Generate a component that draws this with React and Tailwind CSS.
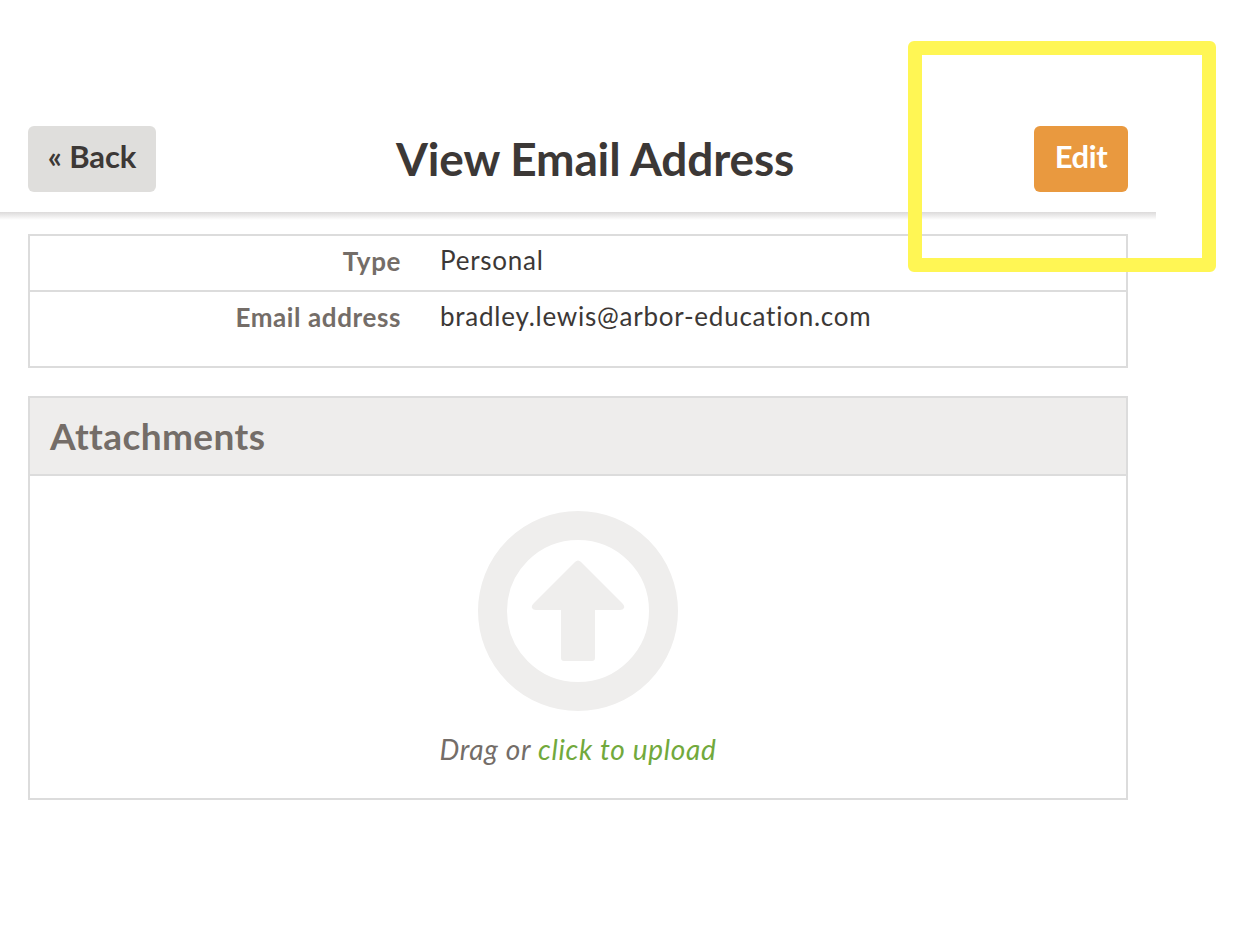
function UploadIcon() {
  return (
    <svg width="200" height="200" viewBox="0 0 200 200" className="block">
      <circle cx="100" cy="100" r="85.5" fill="none" stroke="#efeeed" strokeWidth="29" />
      <path
        d="M97 51 Q100 48 103 51 L144 92 Q147 95 146 97 Q145 99 142 99 L117 99 L117 147 Q117 150 114 150 L86 150 Q83 150 83 147 L83 99 L58 99 Q55 99 54 97 Q53 95 56 92 Z"
        fill="#efeeed"
      />
    </svg>
  );
}

function InfoRow({ label, value, className }) {
  return (
    <div className={`flex ${className}`}>
      <div className="mt-[1px] w-[371px] text-right text-[26px] leading-[34px] font-bold tracking-[0.6px] text-[#746d68]">{label}</div>
      <div className="ml-[39px] text-[26px] leading-[34px] tracking-[0.76px] text-[#3c3836]">{value}</div>
    </div>
  );
}

export default function App() {
  return (
    <div className="relative h-[944px] w-[1258px] overflow-hidden bg-white font-['Lato',sans-serif]">
      <div className="w-[1156px] pt-[126px]">
        <div className="flex h-[86px] items-start justify-between px-[28px]">
          <button className="h-[66px] w-[128px] rounded-[6px] bg-[#dfdedc] pb-[6px] text-[31px] font-bold tracking-[-0.1px] text-[#3c3836]">
            « Back
          </button>
          <h1 className="text-[46px] leading-[66px] font-bold tracking-[-0.15px] text-[#3c3836]">View Email Address</h1>
          <button className="h-[66px] w-[94px] rounded-[6px] bg-[#e9993f] pb-[6px] text-[31px] font-bold tracking-[-0.4px] text-white">
            Edit
          </button>
        </div>
        <div className="h-[8px] bg-gradient-to-b from-[#dcdada] to-white" />
      </div>

      <div className="mt-[14px] ml-[28px] w-[1100px]">
        <div className="h-[134px] border-2 border-[#dcdcdc]">
          <InfoRow label="Type" value="Personal" className="h-[56px] border-b-2 border-[#dcdcdc] pt-[7px]" />
          <InfoRow label="Email address" value="bradley.lewis@arbor-education.com" className="pt-[7px]" />
        </div>

        <div className="mt-[28px] h-[404px] border-2 border-[#dcdcdc]">
          <div className="h-[78px] border-b-2 border-[#dcdcdc] bg-[#eeedec] px-[20px] text-[37px] leading-[76px] font-bold tracking-[0.4px] text-[#746d68]">
            Attachments
          </div>
          <div className="flex flex-col items-center pt-[35px]">
            <UploadIcon />
            <p className="mt-[18px] text-[28px] leading-[40px] tracking-[0.7px] text-[#746d68] italic">
              Drag or <a className="text-[#72a93c]">click to upload</a>
            </p>
          </div>
        </div>
      </div>

      {/* yellow annotation drawn over the page */}
      <div className="absolute top-[41px] left-[908px] h-[231px] w-[308px] rounded-[6px] border-[14px] border-[#fff654]" />
    </div>
  );
}
